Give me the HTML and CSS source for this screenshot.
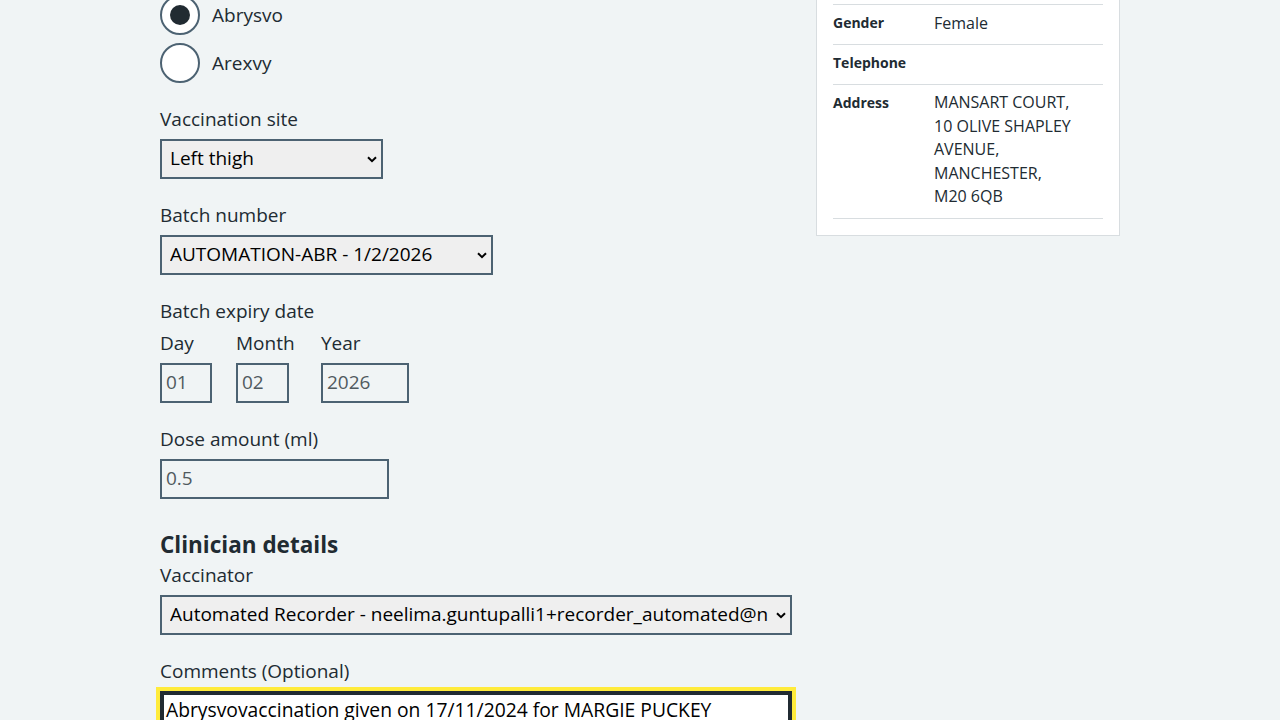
FILE: index.html
```html
<!DOCTYPE html>
<html lang="en">
<head>
<meta charset="utf-8">
<title>Record vaccination</title>
<link rel="stylesheet" href="styles.css">
</head>
<body>
<div class="page">
  <main class="main-col">
    <div class="radios">
      <label class="radio">
        <input type="radio" name="vaccine" checked>
        <span class="radio-mark"></span>
        <span class="radio-label">Abrysvo</span>
      </label>
      <label class="radio">
        <input type="radio" name="vaccine">
        <span class="radio-mark"></span>
        <span class="radio-label">Arexvy</span>
      </label>
    </div>

    <div class="form-group">
      <label class="label" for="site">Vaccination site</label>
      <select id="site" class="select select-site">
        <option>Left thigh</option>
        <option>Right thigh</option>
        <option>Left upper arm</option>
      </select>
    </div>

    <div class="form-group">
      <label class="label" for="batch">Batch number</label>
      <select id="batch" class="select select-batch">
        <option>AUTOMATION-ABR - 1/2/2026</option>
      </select>
    </div>

    <div class="form-group">
      <div class="legend">Batch expiry date</div>
      <div class="date">
        <div class="date-item">
          <label class="sub-label" for="d">Day</label>
          <input id="d" class="input input-day" value="01" readonly>
        </div>
        <div class="date-item date-item-month">
          <label class="sub-label" for="m">Month</label>
          <input id="m" class="input input-month" value="02" readonly>
        </div>
        <div class="date-item">
          <label class="sub-label" for="y">Year</label>
          <input id="y" class="input input-year" value="2026" readonly>
        </div>
      </div>
    </div>

    <div class="form-group">
      <label class="label" for="dose">Dose amount (ml)</label>
      <input id="dose" class="input input-dose" value="0.5" readonly>
    </div>

    <h2 class="heading">Clinician details</h2>
    <div class="form-group">
      <label class="label" for="vaccinator">Vaccinator</label>
      <select id="vaccinator" class="select select-full">
        <option>Automated Recorder - neelima.guntupalli1+recorder_automated@nhs.net</option>
      </select>
    </div>

    <div class="form-group">
      <label class="label" for="comments">Comments (Optional)</label>
      <textarea id="comments" class="textarea" rows="4">Abrysvovaccination given on 17/11/2024 for MARGIE PUCKEY</textarea>
    </div>
  </main>

  <aside class="side-col">
    <div class="card">
      <dl class="summary">
        <div class="row">
          <dt class="key">Gender</dt>
          <dd class="value">Female</dd>
        </div>
        <div class="row">
          <dt class="key">Telephone</dt>
          <dd class="value"></dd>
        </div>
        <div class="row">
          <dt class="key">Address</dt>
          <dd class="value address">MANSART COURT,<br>10 OLIVE SHAPLEY<br>AVENUE,<br>MANCHESTER,<br>M20 6QB</dd>
        </div>
      </dl>
    </div>
  </aside>
</div>
</body>
</html>
```
FILE: styles.css
```css
* { box-sizing: border-box; }

html, body {
  margin: 0;
  padding: 0;
  background: #f0f4f5;
  color: #212b32;
  font-family: "Open Sans", "Noto Sans", sans-serif;
  overflow: hidden;
}

.page {
  width: 960px;
  margin: 0 auto;
  display: grid;
  grid-template-columns: 632px 304px;
  column-gap: 24px;
  align-items: start;
}

.main-col {
  margin-top: -5px;
}

/* Radios */
.radios {
  display: flex;
  flex-direction: column;
  gap: 8px;
  margin-bottom: 22px;
}

.radio {
  display: flex;
  align-items: center;
  gap: 12px;
  height: 40px;
  cursor: pointer;
}

.radio input {
  position: absolute;
  opacity: 0;
  width: 0;
  height: 0;
}

.radio-mark {
  width: 40px;
  height: 40px;
  border: 2px solid #4c6272;
  border-radius: 50%;
  background: #ffffff;
  display: flex;
  align-items: center;
  justify-content: center;
  flex: none;
}

.radio input:checked + .radio-mark::after {
  content: "";
  width: 20px;
  height: 20px;
  border-radius: 50%;
  background: #212b32;
}

.radio-label {
  font-size: 19px;
  line-height: 28px;
}

/* Form groups */
.form-group {
  margin-bottom: 22px;
}

.label,
.legend,
.sub-label {
  display: block;
  font-size: 19px;
  line-height: 28px;
  margin-bottom: 6px;
}

.legend {
  margin-bottom: 4px;
}

.select {
  -webkit-appearance: none;
  appearance: none;
  height: 40px;
  border: 2px solid #4c6272;
  border-radius: 0;
  background-color: #efefef;
  background-image: url("data:image/svg+xml,%3Csvg xmlns='http://www.w3.org/2000/svg' width='10' height='7' viewBox='0 0 10 7'%3E%3Cpath d='M1 1.2 L5 5.2 L9 1.2' fill='none' stroke='%23000' stroke-width='2'/%3E%3C/svg%3E");
  background-repeat: no-repeat;
  background-position: right 4px center;
  background-size: 10px 7px;
  color: #000000;
  font-family: "Open Sans", "Noto Sans", sans-serif;
  font-size: 19px;
  padding: 0 22px 3px 8px;
  display: block;
  outline: none;
}

.select-site { width: 223px; }
.select-batch { width: 333px; }
.select-full { width: 632px; }

.date {
  display: flex;
  gap: 24px;
}

.date-item {
  display: flex;
  flex-direction: column;
  align-items: flex-start;
}

.date-item-month {
  min-width: 61px;
}

.input {
  height: 40px;
  border: 2px solid #4c6272;
  border-radius: 0;
  background: transparent;
  color: #505a5f;
  font-family: "Open Sans", "Noto Sans", sans-serif;
  font-size: 19px;
  padding: 0 4px 3px;
  display: block;
  outline: none;
}

.input-day { width: 52px; }
.input-month { width: 53px; }
.input-year { width: 88px; }
.input-dose { width: 229px; }

.heading {
  font-size: 22.5px;
  line-height: 32px;
  font-weight: 700;
  margin: 30px 0 0;
}

.textarea {
  display: block;
  width: 632px;
  min-height: 120px;
  border: 2px solid #212b32;
  box-shadow: inset 0 0 0 2px #212b32;
  outline: 4px solid #ffeb3b;
  border-radius: 0;
  background: #ffffff;
  color: #000000;
  font-family: "Open Sans", "Noto Sans", sans-serif;
  font-size: 19.3px;
  line-height: 28px;
  padding: 3px 4px;
  resize: none;
}

/* Side card */
.card {
  background: #ffffff;
  border: 1px solid #d8dde0;
  padding: 16px;
  margin-top: -13px;
}

.summary {
  margin: 0;
  border-top: 1px solid #d8dde0;
}

.row {
  display: flex;
  border-bottom: 1px solid #d8dde0;
  padding: 6px 0 9px;
}

.key {
  width: 101px;
  flex: none;
  font-weight: 700;
  font-size: 14px;
  line-height: 24px;
  margin: 0;
}

.value {
  margin: 0;
  font-size: 16px;
  line-height: 24px;
}

.address {
  line-height: 23.6px;
}
```
